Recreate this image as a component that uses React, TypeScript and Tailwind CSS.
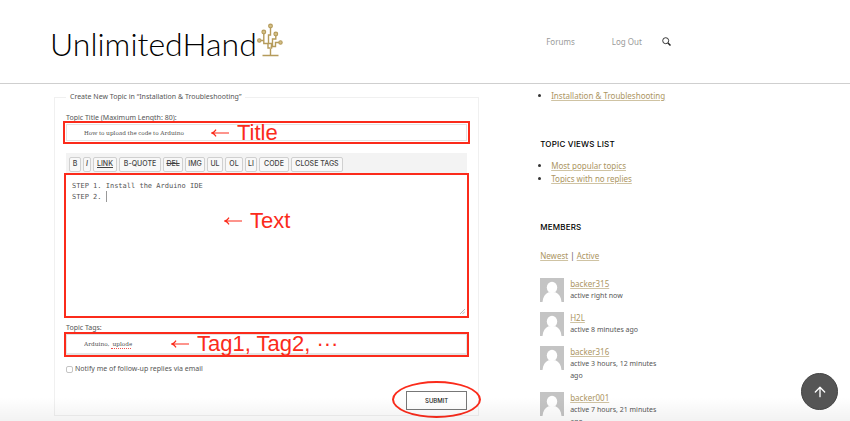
import { ArrowUp } from "lucide-react";

const toolbar = [
  { label: "B", style: "w-3 font-bold" },
  { label: "I", style: "w-2 italic" },
  { label: "LINK", style: "w-6 underline" },
  { label: "B-QUOTE", style: "w-[42px]" },
  { label: "DEL", style: "w-5 line-through" },
  { label: "IMG", style: "w-5" },
  { label: "UL", style: "w-4" },
  { label: "OL", style: "w-[18px]" },
  { label: "LI", style: "w-3" },
  { label: "CODE", style: "w-[30px]" },
  { label: "CLOSE TAGS", style: "w-[52px]" },
];

const members = [
  { name: "backer315", active: "active right now" },
  { name: "H2L", active: "active 8 minutes ago" },
  { name: "backer316", active: "active 3 hours, 12 minutes ago" },
  { name: "backer001", active: "active 7 hours, 21 minutes ago" },
];

const linkStyle = "text-[#ac9562] underline decoration-[#cfc3a3] underline-offset-1";
const headingStyle = "font-[Inter,sans-serif] text-[8px] leading-3 font-medium text-black tracking-wide";

function TreeLogo() {
  return (
    <svg className="w-[26px] h-[34px] mb-1" viewBox="0 0 26 34" fill="none" stroke="#b59b5b" strokeWidth="1.4" aria-hidden="true">
      <path d="M5.500 32.500h16M13.500 32.500v-7" />
      <path d="M13.500 4.500v7.500h-2v8.500h3v5" />
      <path d="M6.800 10.500v10h4.200v4.500h2.500M3.800 17.500h3" />
      <path d="M18.800 12.500v3.500h-3.300v7M23 19.500h-4.500v4h-4v2" />
      <g fill="#d3bf86" strokeWidth="1.100">
        <circle cx="13.500" cy="3" r="1.900" />
        <circle cx="6.800" cy="9" r="1.900" />
        <circle cx="18.800" cy="11" r="1.900" />
        <circle cx="2.300" cy="17.500" r="1.700" />
        <circle cx="23.500" cy="19.500" r="1.700" />
      </g>
    </svg>
  );
}

function Avatar() {
  return (
    <svg className="w-6 h-6 shrink-0" viewBox="0 0 24 24" aria-hidden="true">
      <rect width="24" height="24" fill="#c4c4c4" />
      <ellipse cx="12" cy="9.500" rx="5.200" ry="5.700" fill="#fff" />
      <path d="M2.500 24c.4-5 2.600-8.300 6-9.800h7c3.400 1.500 5.600 4.800 6 9.800z" fill="#fff" />
    </svg>
  );
}

function Note({ text, className }: { text: string; className: string }) {
  return (
    <div className={`absolute flex items-center gap-2 pointer-events-none whitespace-nowrap text-[#fb2b1b] font-['Liberation_Sans',sans-serif] text-[22px] leading-6 ${className}`}>
      <svg className="w-[18px] h-2" viewBox="0 0 18 8" fill="none" stroke="currentColor" strokeWidth="1.200" aria-hidden="true">
        <path d="M18 4H1M5 .6C4 2.500 2.500 3.500.6 4 2.500 4.500 4 5.500 5 7.400" />
      </svg>
      <span>{text}</span>
    </div>
  );
}

function Header() {
  return (
    <header className="border-b border-[#cfcfcf] bg-white px-[54px]">
      <div className="grid grid-cols-[57.3%_1fr] gap-x-[61px] h-[83px] items-center">
        <a href="#" className="flex items-center gap-1 -ml-1 text-black">
          <span className="font-[Lato,sans-serif] font-light text-[32px] leading-10 pt-1 -mr-1">UnlimitedHand</span>
          <TreeLogo />
        </a>
        <nav className="flex items-center pl-1.5 text-[8px] text-[#9a9a9a]">
          <a href="#" className="mr-[37px]">Forums</a>
          <a href="#" className="mr-5">Log Out</a>
          <button type="button" aria-label="Search" className="text-[#222]">
            <svg className="w-[9px] h-[9px]" viewBox="0 0 9 9" fill="none" stroke="currentColor" aria-hidden="true">
              <circle cx="3.700" cy="3.700" r="3" strokeWidth=".9" />
              <path d="M6 6l2.500 2.500" strokeWidth="1.500" />
            </svg>
          </button>
        </nav>
      </div>
    </header>
  );
}

function TopicForm() {
  return (
    <form className="pt-px" onSubmit={(e) => e.preventDefault()}>
      <fieldset className="border border-[#f0f0f0] px-[11px] pt-[11px] pb-[5px] min-w-0">
        <legend className="px-1 text-[7px] leading-[14px]">Create New Topic in “Installation &amp; Troubleshooting”</legend>

        <label htmlFor="title" className="block leading-1.5">Topic Title (Maximum Length: 80):</label>
        <div className="relative -mx-[3px] h-[23px] border-2 border-[#fb2b1b] p-px">
          <input
            id="title"
            type="text"
            defaultValue="How to upload the code to Arduino"
            className="block w-full h-full border border-[#e4e4e4] pl-[17px] font-['Noto_Serif','Liberation_Serif',serif] text-[6px] text-[#555] outline-none"
          />
          <Note text="Title" className="left-[146px] -top-0.5" />
        </div>

        <div className="mt-[9px] flex items-center gap-0.5 h-5 bg-[#f3f3f3] pl-[3px] pt-0.5">
          {toolbar.map((b) => (
            <button
              key={b.label}
              type="button"
              className={`h-[15px] flex items-center justify-center border border-[#d0d0d0] rounded-xs bg-[#f8f8f8] font-[Inter,sans-serif] text-[7px] font-medium text-[#444] whitespace-nowrap ${b.style}`}
            >
              {b.label}
            </button>
          ))}
        </div>
        <div className="relative -mx-0.5 h-[145px] border-2 border-[#fb2b1b]">
          <textarea
            aria-label="Topic content"
            spellCheck={false}
            defaultValue={"STEP 1. Install the Arduino IDE\nSTEP 2. "}
            className="block w-full h-full px-1.5 py-[6px] font-['DejaVu_Sans_Mono',monospace] text-[7px] leading-[11px] text-[#555] outline-none resize-none"
          />
          <span className="absolute left-10 top-4 w-px h-[11px] bg-[#999]" />
          <svg className="absolute right-0.5 bottom-0.5 w-[5px] h-[5px]" viewBox="0 0 5 5" stroke="#999" strokeWidth=".7" aria-hidden="true">
            <path d="M0 5L5 0M2.500 5L5 2.500" />
          </svg>
          <Note text="Text" className="left-[158px] top-[34px]" />
        </div>

        <label htmlFor="tags" className="block mt-1.5 leading-2">Topic Tags:</label>
        <div className="relative -mx-0.5 h-[25px] border-2 border-[#fb2b1b]">
          <input
            id="tags"
            type="text"
            spellCheck={false}
            defaultValue="Arduino,  uplode"
            className="block w-full h-full border border-b-2 border-[#e4e4e4] pl-[17px] font-['Noto_Serif','Liberation_Serif',serif] text-[6px] text-[#555] outline-none"
          />
          <span className="absolute left-[45px] bottom-1.5 w-5 border-b border-dotted border-[#f05050]" />
          <Note text="Tag1, Tag2, ···" className="left-[105px] -top-0.5" />
        </div>

        <div className="mt-[7px] flex items-center gap-0.5 h-2.5">
          <input id="notify" type="checkbox" className="appearance-none w-[7px] h-[7px] border border-[#c4c4c4] rounded-xs bg-white" />
          <label htmlFor="notify">Notify me of follow-up replies via email</label>
        </div>

        <div className="mt-[17px] flex justify-end">
          <div className="relative">
            <button type="submit" className="block w-[61px] h-[19px] border border-[#777] bg-white font-[Inter,sans-serif] text-[6px] font-medium text-[#222]">
              SUBMIT
            </button>
            <span className="absolute -inset-x-3.5 -top-2.5 -bottom-2 border-2 border-[#fb2b1b] rounded-[50%] pointer-events-none" />
          </div>
        </div>
      </fieldset>
    </form>
  );
}

function Sidebar() {
  return (
    <aside className="text-[8px] leading-[13px]">
      <ul className="list-disc pl-[11px] text-[#333]">
        <li><a href="#" className={linkStyle}>Installation &amp; Troubleshooting</a></li>
      </ul>

      <h2 className={`mt-9 ${headingStyle}`}>TOPIC VIEWS LIST</h2>
      <ul className="mt-[9px] list-disc pl-[11px] text-[#333]">
        <li><a href="#" className={linkStyle}>Most popular topics</a></li>
        <li><a href="#" className={linkStyle}>Topics with no replies</a></li>
      </ul>

      <h2 className={`mt-9 ${headingStyle}`}>MEMBERS</h2>
      <p className="mt-4">
        <a href="#" className={linkStyle}>Newest</a> | <a href="#" className={linkStyle}>Active</a>
      </p>
      <ul className="mt-4 flex flex-col gap-2.5 max-w-[124px] leading-3">
        {members.map((m) => (
          <li key={m.name} className="flex items-start gap-1.5">
            <Avatar />
            <div>
              <a href="#" className={`block ${linkStyle}`}>{m.name}</a>
              <p className="text-[7px] leading-3">{m.active}</p>
            </div>
          </li>
        ))}
      </ul>
    </aside>
  );
}

export default function App() {
  return (
    <div className="relative h-screen overflow-hidden bg-white font-['Noto_Sans',sans-serif] text-[7px] text-[#555]">
      <Header />
      <main className="grid grid-cols-[57.3%_1fr] gap-x-[61px] items-start px-[54px] pt-[5px]">
        <TopicForm />
        <Sidebar />
      </main>
      <div className="absolute inset-x-0 bottom-0 h-6 bg-linear-to-b from-transparent to-black/5 pointer-events-none" />
      <button
        type="button"
        aria-label="Back to top"
        className="absolute right-3 bottom-[11px] w-[37px] h-[37px] rounded-full bg-[#555] border border-[#444] flex items-center justify-center text-white"
      >
        <ArrowUp className="w-4 h-4" strokeWidth={2} />
      </button>
    </div>
  );
}
